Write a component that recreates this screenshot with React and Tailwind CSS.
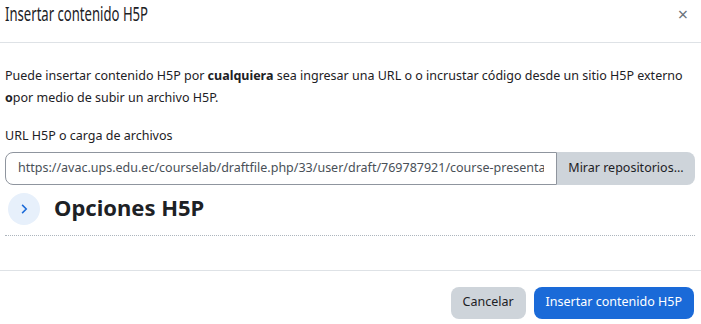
import React from "react";

const App = () => {
  return (
    <div className="w-[701px] h-[324px] bg-white text-[#1d2125] font-['Noto_Sans',sans-serif] overflow-hidden">
      <div className="flex items-center justify-between h-[43px] px-[5px] border-b border-[#dee2e6]">
        <h5 className="text-[19px] leading-none -mt-[14px] whitespace-nowrap scale-x-[0.69] origin-left">
          Insertar contenido H5P
        </h5>
        <button className="text-[#6a737b] text-[18px] leading-none mr-[8px] -mt-[14px]">×</button>
      </div>

      <div className="px-[5px] pt-[22px]">
        <p className="text-[12.5px] leading-[22px]">
          Puede insertar contenido H5P por <b>cualquiera</b> sea ingresar una URL o o incrustar código desde un sitio H5P externo <b>o</b>por medio de subir un archivo H5P.
        </p>

        <label className="block text-[12.5px] mt-[18px] mb-[6px]">URL H5P o carga de archivos</label>
        <div className="flex h-[33px] w-[690px]">
          <input
            readOnly
            value="https://avac.ups.edu.ec/courselab/draftfile.php/33/user/draft/769787921/course-presentation.h5p"
            className="flex-1 min-w-0 border border-[#8f959e] rounded-l-[8px] px-[12px] text-[12.5px] text-[#495057] outline-none"
          />
          <button className="w-[138px] bg-[#ced4da] rounded-r-[8px] text-[12.5px] text-[#1d2125]">
            Mirar repositorios...
          </button>
        </div>

        <div className="flex items-center gap-[14px] mt-[8px] ml-[3px] h-[32px]">
          <span className="flex items-center justify-center w-[32px] h-[32px] rounded-full bg-[#e7f0fb]">
            <svg width="12" height="12" viewBox="0 0 16 16" fill="none">
              <path d="M5.5 2.5 11 8l-5.5 5.5" stroke="#1a6ad8" strokeWidth="2" />
            </svg>
          </span>
          <h3 className="text-[22px] font-bold leading-none -mt-[4px]">Opciones H5P</h3>
        </div>
        <div className="mt-[10px] w-[690px] border-b border-dotted border-[#adb5bd]"></div>
      </div>

      <div className="mt-[34px] border-t border-[#dee2e6] flex justify-end gap-[8px] px-[7px] pt-[16px]">
        <button className="h-[32px] px-[12px] rounded-[8px] bg-[#ced4da] text-[12.5px] text-[#1d2125]">Cancelar</button>
        <button className="h-[32px] px-[12px] rounded-[8px] bg-[#1a6ad8] text-[12.5px] text-white">Insertar contenido H5P</button>
      </div>
    </div>
  );
};

export default App;
